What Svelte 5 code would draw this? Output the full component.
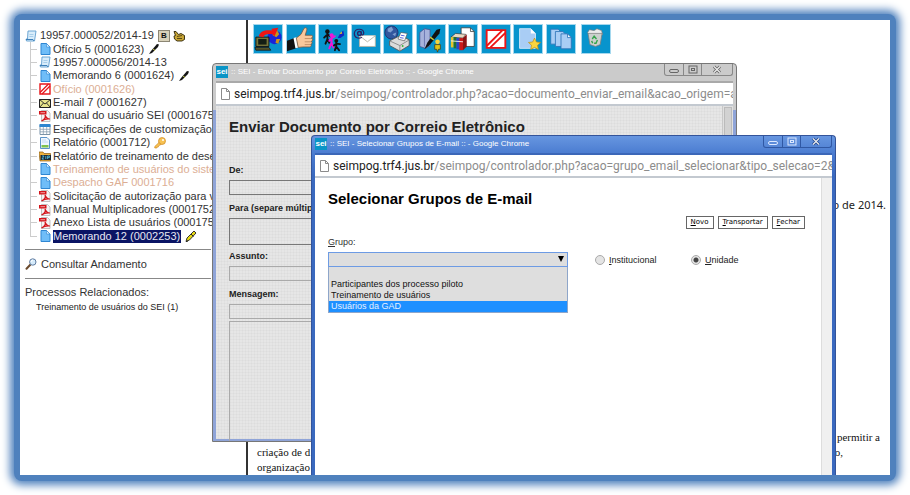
<script>
  const tree = [
    { icon: 'doc', label: 'Ofício 5 (0001623)', extra: 'pen' },
    { icon: 'proc', label: '19957.000056/2014-13' },
    { icon: 'doc', label: 'Memorando 6 (0001624)', extra: 'pen' },
    { icon: 'cancel', label: 'Ofício (0001626)', faded: true },
    { icon: 'mail', label: 'E-mail 7 (0001627)' },
    { icon: 'pdf', label: 'Manual do usuário SEI (0001675)' },
    { icon: 'table', label: 'Especificações de customização (0' },
    { icon: 'report', label: 'Relatório (0001712)', extra: 'key' },
    { icon: 'zip', label: 'Relatório de treinamento de desen' },
    { icon: 'doc', label: 'Treinamento de usuários do sistema', faded: true },
    { icon: 'doc', label: 'Despacho GAF 0001716', faded: true },
    { icon: 'pdf', label: 'Solicitação de autorização para via' },
    { icon: 'pdf', label: 'Manual Multiplicadores (0001752)' },
    { icon: 'pdf', label: 'Anexo Lista de usuários (0001753)' },
    { icon: 'doc', label: 'Memorando 12 (0002253)', selected: true, extra: 'marker' }
  ];

  const tools = [
    ['send', 'Enviar Processo'],
    ['thumb', 'Atualizar Andamento'],
    ['people', 'Atribuir Processo'],
    ['email', 'Enviar E-mail'],
    ['web', 'Imprimir Web'],
    ['sign', 'Assinar Documento'],
    ['books', 'Incluir em Bloco'],
    ['cancel', 'Cancelar Documento'],
    ['favorite', 'Adicionar aos Favoritos'],
    ['copies', 'Versões do Documento']
  ];

  const groups = ['', 'Participantes dos processo piloto', 'Treinamento de usuários', 'Usuários da GAD'];
  let scope = $state('unidade');
  let group = $state('');
</script>

{#snippet small(name)}
  <svg class="ico" viewBox="0 0 12 12" aria-hidden="true">
    {#if name === 'doc'}
      <path d="M2 .5h5.500L11 4v7.500H2z" fill="#6fbdf8" stroke="#2f86d2" />
      <path d="M7.500.5V4H11z" fill="#d9f0ff" stroke="#2f86d2" stroke-width=".6" />
    {:else if name === 'proc'}
      <path d="M3 1h8L9.500 11H1.500L1 9h1.500z" fill="#d9edfb" stroke="#5f9dce" stroke-width=".9" />
      <path d="M1 9.500h7l1 1.500" fill="none" stroke="#3d7fb8" />
      <path d="M4.500 4.500h4M4.300 6.500h4" stroke="#9bc5e6" stroke-width=".8" />
    {:else if name === 'cancel'}
      <path d="M1 1h10v10H1z" fill="#fff" stroke="#e8171c" stroke-width="1.400" />
      <path d="M1 9.500L9.500 1M3 11l8-8" stroke="#e8171c" stroke-width="1.300" />
    {:else if name === 'mail'}
      <path d="M.5 2.500h11v8H.5z" fill="#e9e58c" stroke="#222" />
      <path d="M.5 2.500L6 7l5.500-4.500M.5 10.500l4-4.500m7 4.500l-4-4.500" fill="none" stroke="#222" stroke-width=".9" />
    {:else if name === 'pdf'}
      <path d="M2.500.5h6L11 3v8.500H2.500z" fill="#f4f4f4" stroke="#b4b4b4" stroke-width=".8" />
      <path d="M0 1h7.500v3.500H0z" fill="#d4151b" />
      <path d="M1.500 2.700h4.500" stroke="#f6c4c4" stroke-width=".8" />
      <path d="M2.500 11C5.500 9.500 6.800 7 6 5c1 2.500 2.500 4 5 4-2.500-.3-6 .2-8.500 2z" fill="none" stroke="#d4151b" stroke-width="1.200" />
    {:else if name === 'table'}
      <path d="M1 2h10v9.500H1z" fill="#fff" stroke="#7a93a8" />
      <path d="M.5 1h11v3H.5z" fill="#2d86d0" />
      <path d="M1 6.300h10M1 8.800h10M4.300 4v7M7.700 4v7" stroke="#8aa0b2" stroke-width=".8" />
    {:else if name === 'report'}
      <path d="M1.500.5H8L10.500 3v8.500h-9z" fill="#eef6ff" stroke="#5c94c9" />
      <path d="M2.500 8h7v2.500h-7z" fill="#7fc24c" />
      <path d="M3 3h4M3 5h6" stroke="#b9d4ec" stroke-width=".8" />
    {:else if name === 'zip'}
      <path d="M0 2h4l1 1.500h6.500V11H1z" fill="#f0b13b" stroke="#8a5a10" stroke-width=".7" />
      <path d="M1.500 5H12v5H1.500z" fill="#1d2a35" />
      <path d="M3 6h2L3 9h2M6.800 6v3M8.600 9V6h1.800v1.600H8.600" fill="none" stroke="#55c7e8" stroke-width=".8" />
    {:else if name === 'pen'}
      <path d="M1 11l2-3 6-7 2 .5-1 2.500-6 6z" fill="#151515" />
      <path d="M5 6l2 1.500" stroke="#c9c94a" stroke-width="1" />
    {:else if name === 'marker'}
      <path d="M1 11.500l1-3.500L9 1l2 2-6.500 7z" fill="#e6d813" stroke="#222" stroke-width=".9" />
      <path d="M6 4l2.500 2.500M1 11.500l2-.5" stroke="#222" />
    {:else if name === 'key'}
      <circle cx="8" cy="4" r="3.500" fill="#f7c252" stroke="#cf8a24" stroke-width=".7" />
      <path d="M5 5.500L.8 9.500V11h2l.4-1 1.200-.2.400-1.200L7 7.500z" fill="#f7c252" stroke="#cf8a24" stroke-width=".7" />
      <circle cx="9" cy="3" r="1" fill="#fff" />
    {:else if name === 'hand'}
      <path d="M1 1.500l2 0 2.500 3L8 3.500l3.500 2v4L9 11H4L1.500 9 1 6l1.500-.5z" fill="#c7a536" stroke="#2c2408" stroke-width=".9" />
      <path d="M4 6.500l5-1M4 8.500h5" stroke="#2c2408" stroke-width=".7" />
    {:else if name === 'search'}
      <path d="M5.500 6.500L1.500 10.800" stroke="#6b4a2d" stroke-width="2" stroke-linecap="round" />
      <circle cx="7.800" cy="4" r="3.200" fill="#d5ebfb" stroke="#5f7ba0" />
      <path d="M6 4a2 2 0 0 1 2-2" fill="none" stroke="#fff" />
    {:else if name === 'page'}
      <path d="M2.500.5h5l3 3v8h-8z" fill="#fff" stroke="#8b8b8b" />
      <path d="M7.500.5v3h3" fill="none" stroke="#8b8b8b" />
    {/if}
  </svg>
{/snippet}

{#snippet tool(name)}
  <svg viewBox="0 0 30 30" aria-hidden="true">
    {#if name === 'send'}
      <circle cx="22" cy="13" r="7.500" fill="#1a24d8" />
      <path d="M20 7l5-1 2 4-3 3-4-2zM24 15l4 0-2 5-3-1z" fill="#c8941c" />
      <path d="M2 13h14v10H2z" fill="#77763a" stroke="#111" />
      <path d="M4.500 15h9v6h-9z" fill="#141e14" />
      <path d="M1 24h15l2 3H2z" fill="#55542a" stroke="#111" stroke-width=".8" />
      <path d="M5 12C7 6 13 5 19 6l0-2 7-1-4 9-2-2c-5-1-9 0-10 3z" fill="#f01414" />
    {:else if name === 'thumb'}
      <path d="M0 17l8-3 2 11-10 3z" fill="#111" />
      <path d="M7 14l3-1 2 11-3 1z" fill="#fff" />
      <path d="M10 14l5-4 3-6c2-2 4-1 3 2l-1.500 5H26c2 0 2 3 0 3 2 .5 2 3 0 3.500 1.500 1 1 3-.5 3 1 1 .5 3-1.500 3h-7l-5 .5z" fill="#f8c89c" stroke="#7c5236" stroke-width=".8" />
      <path d="M19 14.500h7M19 18h7M19 21h6.500" stroke="#a87750" stroke-width=".7" />
    {:else if name === 'people'}
      <g stroke-linecap="round" stroke-width="2" fill="none">
        <path d="M9 9v6M9 10l-3.500 3.500M9 10l3 2M9 15l-2 5m2-5l2 4" stroke="#111" />
        <path d="M13.500 13v6m0-5l-2.500 3m2.500-3l3.500-2m-3.500 7l-2.500 6m2.500-6l2 5" stroke="#f015d8" />
        <path d="M18.500 19v4m0-3l-2.500 2m2.500-2l4 .5m-4 2.500l-1.500 4m1.500-4l3 4" stroke="#111" />
      </g>
      <circle cx="9" cy="7" r="2.400" fill="#111" /><circle cx="13.500" cy="11" r="2.200" fill="#f015d8" /><circle cx="18.500" cy="17" r="2.100" fill="#111" />
      <path d="M20 14l2-4 4-4 1 5-4 3z" fill="#1524c4" /><path d="M22 10l2-3 1 2z" fill="#f0c020" />
    {:else if name === 'email'}
      <path d="M8 11.500h17v11.500H8z" fill="#fff" stroke="#b6b6a8" />
      <path d="M8 11.500l8.500 6.500 8.500-6.500" fill="#fff" stroke="#b6b6a8" />
      <circle cx="8" cy="9" r="2" fill="none" stroke="#2c2466" stroke-width="1.500" />
      <path d="M10 7v3c1 1.500 3 .5 2.500-2C12 3.500 3 3 2.500 9c0 5 5 6 8 4" fill="none" stroke="#2c2466" stroke-width="1.300" />
    {:else if name === 'web'}
      <circle cx="8" cy="8" r="7" fill="#31579e" stroke="#1b3470" />
      <path d="M4 4l4-2 2 3-3 3-3-1zM9 10l4-2-1 4z" fill="#7f9ed0" />
      <path d="M6 17l12-6 9 5v6l-10 6-11-6z" fill="#dcdcdc" stroke="#555" stroke-width=".9" />
      <path d="M6 17l11 5 10-6M17 22v6" fill="none" stroke="#777" stroke-width=".8" />
      <path d="M15 15l3-7 7 1-3 8z" fill="#fff" stroke="#555" stroke-width=".7" /><path d="M18 11l4 .6M17 13.500l4 .6" stroke="#4c5ad8" />
      <circle cx="20" cy="22.500" r="1" fill="#37b337" />
    {:else if name === 'sign'}
      <path d="M3 8l5-4 6 1v17l-5 3-6-2z" fill="#a7b3dc" stroke="#46508c" stroke-width=".8" /><path d="M8 4v19" stroke="#6975b0" />
      <path d="M8 26l3-7L21 5l4-1-1 5-11 13z" fill="#111" /><path d="M14 13l4 3" stroke="#c8c63a" stroke-width="1.500" />
      <circle cx="22" cy="18" r="2.500" fill="#f3d23c" /><path d="M19 21h6v5h-2l-1 3-1-3h-2z" fill="#e3c416" stroke="#443a10" stroke-width=".8" />
    {:else if name === 'books'}
      <path d="M13 3h10l4 4v16H13z" fill="#fff" stroke="#333" stroke-width=".8" /><path d="M23 3v4h4" fill="none" stroke="#333" stroke-width=".8" />
      <path d="M2 13l5-4 11 1-3 4z" fill="#ead8c0" stroke="#222" stroke-width=".6" />
      <path d="M2 13h3v11H2z" fill="#e8c52b" /><path d="M5 13h3v12H5z" fill="#226f31" /><path d="M8 14h3v12H8z" fill="#2e42c4" /><path d="M11 14h4v13h-4z" fill="#cb1a1a" />
      <path d="M15 14l4-4v13l-4 4z" fill="#8b1313" /><path d="M2 17l13 1" stroke="#eee" />
    {:else if name === 'cancel'}
      <path d="M5 5.500h20v19H5z" fill="#fff" stroke="#ee1515" stroke-width="2" />
      <path d="M5 22.500L22 5.500M9 24L25 8.500" stroke="#ee1515" stroke-width="2" />
    {:else if name === 'favorite'}
      <path d="M6 4h12l5 5v16H6z" fill="#a9cdf5" stroke="#d4e8fc" /><path d="M18 4v5h5z" fill="#fff" />
      <path d="M22 14l2 4.200 4.500.5-3.300 3 .9 4.500-4.100-2.200-4.100 2.200.9-4.500-3.300-3 4.500-.5z" fill="#f9d540" stroke="#b98b12" stroke-width=".7" />
    {:else if name === 'copies'}
      <g fill="#a9cdf5" stroke="#2c72b8" stroke-width=".9">
        <path d="M4 4.500h8l3 3v13H4z" /><path d="M9 7h8l3 3v13H9z" /><path d="M15 9.500h7l4 4v12H15z" /><path d="M22 9.500v4h4z" fill="#fff" />
      </g>
    {:else}
      <path d="M6 8l2-3 5 1 3-2 5 2 1 4-2 2H8z" fill="#ececec" stroke="#777" stroke-width=".7" />
      <path d="M6.500 9l15 0-2 12-5 2-6-2z" fill="#ccd0cd" stroke="#7d7d7d" stroke-width=".8" />
      <path d="M11 15l2-3 2.500 3M16.500 16l-1.500 3.500h-2M11.500 19.500L10.300 17" fill="none" stroke="#35a34b" stroke-width="1.500" />
    {/if}
  </svg>
{/snippet}

{#snippet chrome(title, path)}
  <div class="titlebar">
    <span class="sei">sei</span>
    <span class="title">:: SEI - {title} :: - Google Chrome</span>
    <div class="controls">
      <button aria-label="Minimizar"><svg viewBox="0 0 12 9"><rect x="1.500" y="4.500" width="9" height="3" rx="1.500" /></svg></button>
      <button aria-label="Maximizar"><svg viewBox="0 0 12 9"><rect x="2" y="1" width="8" height="7" /><rect x="4.500" y="3.500" width="3" height="2" /></svg></button>
      <button aria-label="Fechar janela"><svg viewBox="0 0 12 9"><path class="halo" d="M3 1.500l6 6m0-6l-6 6" /><path class="x" d="M3 1.500l6 6m0-6l-6 6" /></svg></button>
    </div>
  </div>
  <div class="url">
    {@render small('page')}
    <span class="address"><b>seimpog.trf4.jus.br</b>{path}</span>
  </div>
{/snippet}

<div class="page">
  <div class="glow">
    <div class="screen">
      <nav class="sidebar">
        <ul class="tree">
          <li class="root">
            {@render small('proc')}
            <a href="#processo">19957.000052/2014-19</a>
            <span class="badge">B</span>
            {@render small('hand')}
          </li>
          {#each tree as item}
            <li>
              <i class="branch"></i>
              {@render small(item.icon)}
              <a href="#documento" class:faded={item.faded} class:selected={item.selected}>{item.label}</a>
              {#if item.extra}<span class="extra">{@render small(item.extra)}</span>{/if}
            </li>
          {/each}
        </ul>
        <a class="history" href="#andamento">{@render small('search')}Consultar Andamento</a>
        <div class="related">
          <p>Processos Relacionados:</p>
          <a href="#relacionados">Treinamento de usuários do SEI (1)</a>
        </div>
      </nav>

      <main>
        <div class="toolbar">
          <div class="tools">
            {#each tools as [name, label]}
              <button aria-label={label}>{@render tool(name)}</button>
            {/each}
          </div>
          <button aria-label="Excluir">{@render tool('trash')}</button>
        </div>
        <p class="date">o de 2014.</p>
        <div class="letter">
          <p><span></span><span>permitir a</span></p>
          <p class="short"><span>criação de d</span><span>o,</span></p>
          <p><span>organização</span></p>
        </div>
      </main>

      <section class="window back">
        {@render chrome('Enviar Documento por Correio Eletrônico', '/seimpog/controlador.php?acao=documento_enviar_email&acao_origem=a')}
        <div class="body">
          <div class="content">
            <h1>Enviar Documento por Correio Eletrônico</h1>
            <form>
              <label for="from">De:</label>
              <input id="from" class="strong" />
              <label for="to">Para (separe múltip</label>
              <textarea id="to" class="strong"></textarea>
              <label for="subject">Assunto:</label>
              <input id="subject" />
              <label for="template">Mensagem:</label>
              <input id="template" />
              <textarea class="message" aria-label="Texto"></textarea>
            </form>
          </div>
          <div class="scroll"><i></i></div>
        </div>
      </section>

      <section class="window front">
        {@render chrome('Selecionar Grupos de E-mail', '/seimpog/controlador.php?acao=grupo_email_selecionar&tipo_selecao=2&')}
        <div class="body">
          <div class="content">
            <h1>Selecionar Grupos de E-mail</h1>
            <div class="actions">
              <button><u>N</u>ovo</button>
              <button><u>T</u>ransportar</button>
              <button><u>F</u>echar</button>
            </div>
            <label class="caption" for="group"><u>G</u>rupo:</label>
            <div class="filter">
              <div class="combo">
                <select id="group" bind:value={group}>
                  {#each groups as g}<option value={g}>{g}</option>{/each}
                </select>
                <svg class="arrow" viewBox="0 0 6 6" aria-hidden="true"><path d="M0 0h6L3 6z" /></svg>
                <ul class="options">
                  {#each groups as g, i}<li class:active={i === 3}>{g}</li>{/each}
                </ul>
              </div>
              <label class="radio"><input type="radio" name="scope" value="institucional" bind:group={scope} /><span><u>I</u>nstitucional</span></label>
              <label class="radio"><input type="radio" name="scope" value="unidade" bind:group={scope} /><span><u>U</u>nidade</span></label>
            </div>
          </div>
          <div class="scroll"></div>
        </div>
      </section>
    </div>
  </div>
</div>

<style>
  :global(body) { background: #fff; }
  * { box-sizing: border-box; }
  p, ul, h1 { margin: 0; padding: 0; }
  ul { list-style: none; }
  a { color: inherit; text-decoration: none; }
  button { padding: 0; border: 0; background: none; font: inherit; color: inherit; }
  svg { display: block; flex: none; }

  .page {
    height: 100vh;
    padding: 14px;
    font-family: "Liberation Sans", Arial, sans-serif;
    font-size: 11px;
    color: #333;
    overflow: hidden;
  }
  .glow {
    height: 100%;
    padding: 6px;
    border-radius: 8px;
    background: #4f81bd;
    box-shadow: 0 0 9px 4px #4f81bd;
  }
  .screen {
    position: relative;
    display: flex;
    height: 100%;
    background: #fff;
  }
  .ico { width: 12px; height: 12px; }

  /* process tree */
  .sidebar {
    flex: none;
    width: 228px;
    padding: 9px 0 0 5px;
    border-right: 2px solid #333;
    white-space: nowrap;
  }
  .tree {
    display: grid;
    grid-auto-rows: 1fr;
    height: 214px;
    width: 188px;
  }
  .tree li { display: flex; align-items: center; gap: 2px; padding-left: 5px; min-width: 0; }
  .tree .root { padding-left: 0; gap: 3px; }
  .tree a { line-height: 13px; }
  .branch {
    align-self: stretch;
    flex: none;
    width: 7px;
    border-left: 1px solid #ccc;
    background: linear-gradient(#ccc, #ccc) 0 50% / 100% 1px no-repeat;
  }
  .tree li:last-child .branch { margin-bottom: 6px; background-position: 0 100%; }
  .faded { color: #dcae94; }
  .selected { background: #0a1464; color: #e6e6f2; padding-right: 1px; }
  .extra { margin-left: 2px; }
  .badge {
    width: 12px;
    height: 12px;
    margin-left: 1px;
    border: 1px solid #8c8674;
    background: #d9d2ba;
    font-size: 8px;
    font-weight: bold;
    line-height: 10px;
    text-align: center;
    color: #111;
  }
  .history {
    display: flex;
    align-items: center;
    gap: 4px;
    width: 186px;
    height: 30px;
    margin-top: 6px;
    border-top: 1px solid #888;
    border-bottom: 1px solid #888;
  }
  .related { padding-top: 6px; line-height: 15px; }
  .related a { display: block; padding-left: 11px; font-size: 9px; color: #222; }

  /* document pane */
  main { flex: 1; min-width: 0; display: flex; flex-direction: column; }
  .toolbar { display: flex; gap: 5px; padding: 4px 0 0 5px; }
  .tools { display: flex; justify-content: space-between; width: 323px; }
  .toolbar button { width: 30px; height: 30px; background: #0894cd; border: 1px solid #a5d8ee; }
  .toolbar svg { width: 28px; height: 28px; }
  .date {
    margin-top: 143px;
    padding-right: 4px;
    font: 11px/16px "Noto Sans", sans-serif;
    color: #222;
    text-align: right;
  }
  .letter {
    margin-top: auto;
    padding: 0 10px 0 9px;
    font: 11px/15px "Liberation Serif", serif;
    color: #111;
  }
  .letter p { display: flex; justify-content: space-between; }
  .letter .short { padding-right: 37px; }

  /* browser windows */
  .window {
    position: absolute;
    display: flex;
    flex-direction: column;
    width: 525px;
    padding: 0 3px;
    border: 1px solid #777;
    border-radius: 4px 4px 0 0;
    overflow: hidden;
  }
  .back {
    left: 192px;
    top: 43px;
    height: 379px;
    padding-bottom: 2px;
    background: linear-gradient(#cbcbcb 46px, #8fa4d8 46px);
  }
  .front {
    left: 291px;
    top: 115px;
    bottom: 0;
    border-color: #34549a;
    border-bottom: 0;
    background: linear-gradient(#6796e0, #4a7bd0 18px, #3a69bf 40px);
  }
  .titlebar { display: flex; height: 17px; flex: none; color: #fff; }
  .sei {
    width: 12px;
    height: 12px;
    margin: 2px 3px 0 0;
    background: #0a94c6;
    font-size: 8px;
    font-weight: bold;
    line-height: 11px;
    text-align: center;
  }
  .title { flex: 1; font-size: 8px; line-height: 15px; white-space: nowrap; }
  .controls { display: flex; height: 12px; border: 1px solid #888; border-top: 0; border-radius: 0 0 3px 3px; }
  .controls button { width: 18px; display: grid; place-items: center; }
  .controls button + button { border-left: 1px solid #888; }
  .controls button:last-child { width: 31px; }
  .controls svg { width: 12px; height: 9px; fill: none; stroke: #666; }
  .controls .halo { stroke: #666; stroke-width: 3; }
  .controls .x { stroke: #eee; stroke-width: 1.2; }
  .front .controls, .front .controls button { border-color: #3058a4; }
  .front .controls svg { stroke: #dce8ff; }
  .front .controls .halo { stroke: #24498f; }
  .url {
    display: flex;
    align-items: center;
    flex: none;
    gap: 3px;
    height: 25px;
    padding: 0 0 0 3px;
    background: #fff;
    border-top: 2px solid #a9a9a9;
    border-bottom: 2px solid #c3c9d0;
  }
  .front .url { border-top-color: #3b67b8; }
  .address {
    flex: 1;
    min-width: 0;
    overflow: hidden;
    white-space: nowrap;
    font: 12px/20px Roboto, "Open Sans", sans-serif;
    color: #8c8c8c;
  }
  .address b { font-weight: normal; color: #222; }
  .body { flex: 1; min-height: 0; display: flex; background: #fff; }
  .content { flex: 1; min-width: 0; padding: 11px 16px 0 13px; }
  h1 { font-size: 15px; line-height: 20px; color: #000; white-space: nowrap; }
  .scroll { flex: none; width: 11px; background: #f0f0f0; border-left: 1px solid #ddd; }

  .back .body {
    background:
      repeating-linear-gradient(90deg, #0000 0 2px, #00000006 2px 3px),
      repeating-linear-gradient(#0000 0 2px, #00000006 2px 3px),
      #e6e6e6;
  }
  .back h1 { color: #222; }
  .back .scroll { background: #e0e0e0; padding: 1px; border-color: #c8c8c8; }
  .scroll i { display: block; height: 120px; background: #d2d2d2; border: 1px solid #bbb; }
  form { display: flex; flex-direction: column; padding-top: 27px; }
  form label { height: 16px; font-size: 9px; font-weight: bold; line-height: 12px; color: #222; white-space: nowrap; }
  form input, form textarea {
    width: 100%;
    height: 15px;
    margin: 0 0 7px;
    padding: 0;
    border: 1px solid #aaa;
    border-radius: 0;
    background: none;
    resize: none;
    outline: 0;
  }
  form .strong { border-color: #777; }
  form textarea { height: 27px; margin-bottom: 5px; }
  #template { margin-bottom: 2px; }
  form .message { height: 130px; margin: 0; }

  .actions { display: flex; justify-content: flex-end; gap: 4px; margin-top: 7px; }
  .actions button {
    height: 13px;
    padding: 0 4px;
    border: 1px solid #666;
    background: #fff;
    font: 7px/11px "DejaVu Sans", sans-serif;
    color: #000;
  }
  .caption { display: block; margin-top: 7px; font-size: 9px; line-height: 12px; }
  .filter { display: flex; align-items: center; margin-top: 4px; font-size: 9px; color: #222; }
  .combo { position: relative; width: 240px; margin-right: 27px; }
  select {
    display: block;
    appearance: none;
    width: 100%;
    height: 15px;
    padding: 0 3px;
    border: 1px solid #6d9be4;
    border-radius: 0;
    background: #dedede;
    font: inherit;
    outline: 0;
  }
  .arrow { position: absolute; right: 4px; top: 4px; width: 6px; height: 6px; }
  .options {
    position: absolute;
    top: 15px;
    left: 0;
    right: 0;
    padding-top: 1px;
    border: 1px solid #8ea6ca;
    border-top: 0;
    background: #dedede;
    line-height: 11px;
    color: #111;
  }
  .options li { height: 11px; padding-left: 2px; }
  .options .active { background: #1e90ff; color: #e4f1ff; }
  .radio { display: flex; align-items: center; gap: 4px; width: 96px; }
  .radio input {
    appearance: none;
    width: 10px;
    height: 10px;
    margin: 0;
    border: 1px solid #aaa;
    border-radius: 50%;
    background: #e4e4e4;
  }
  .radio input:checked { background: radial-gradient(circle, #444 0 2px, #e4e4e4 3px); }
</style>
